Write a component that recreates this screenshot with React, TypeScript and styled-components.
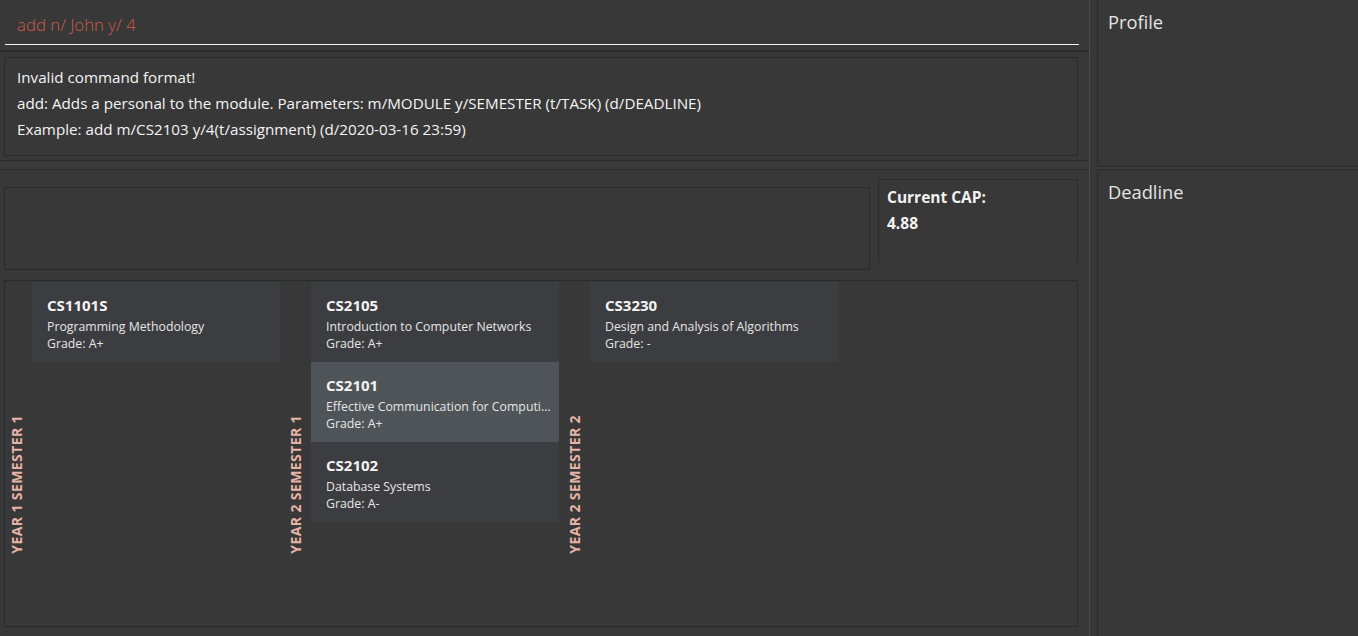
import React from "react";
import styled, { createGlobalStyle } from "styled-components";

const GlobalStyle = createGlobalStyle`
  html, body { margin: 0; padding: 0; background: #383838; }
  body { font-family: "Open Sans", "Noto Sans", sans-serif; color: #f0f0f0; }
  * { box-sizing: border-box; }
`;

const Root = styled.div`
  display: flex;
  width: 1358px;
  height: 636px;
  background: #383838;
  overflow: hidden;
`;

const LeftPane = styled.div`
  width: 1089px;
  display: flex;
  flex-direction: column;
`;

const CommandArea = styled.div`
  height: 50px;
  padding: 0 10px 0 5px;
`;

const CommandInput = styled.div`
  height: 45px;
  border-bottom: 1px solid #f2f2f2;
  padding: 4px 0 0 12px;
  display: flex;
  align-items: center;
  font-size: 16.8px;
  font-weight: 300;
  color: #cd5a4a;
`;

const HLine = styled.div`
  height: 2px;
  background: #2c2c2c;
`;

const ResultArea = styled.div`
  height: 108px;
  padding: 5px 11px 4px 4px;
`;

const ResultBox = styled.div`
  height: 99px;
  border: 1px solid #2b2b2b;
  padding: 6px 12px 0;
  font-size: 15.2px;
  line-height: 26px;
  color: #f4f4f4;
`;

const SplitDividerH = styled.div`
  height: 10px;
  border-top: 1px solid #2b2b2b;
  border-bottom: 1px solid #2b2b2b;
  background: #3a3a3a;
`;

const LowerArea = styled.div`
  flex: 1;
  display: flex;
  flex-direction: column;
  padding: 9px 11px 9px 4px;
`;

const TopRow = styled.div`
  display: flex;
  height: 91px;
  gap: 8px;
`;

const EmptyBox = styled.div`
  flex: 1;
  margin-top: 8px;
  border: 1px solid #2b2b2b;
`;

const CapBox = styled.div`
  width: 200px;
  height: 84px;
  border: 1px solid #2b2b2b;
  border-bottom: none;
  padding: 4px 8px;
  font-size: 15.5px;
  font-weight: 700;
  line-height: 26px;
  color: #f2f2f2;
`;

const ModuleBox = styled.div`
  margin-top: 10px;
  flex: 1;
  border: 1px solid #2b2b2b;
  padding: 1px 0 0 0;
  display: flex;
  gap: 4px;
`;

const SemesterColumn = styled.div`
  display: flex;
`;

const SemesterLabelCell = styled.div`
  width: 27px;
  display: flex;
  flex-direction: column;
  justify-content: flex-end;
  align-items: flex-start;
  padding: 0 0 72px 2px;
`;

const SemesterLabel = styled.span`
  writing-mode: vertical-rl;
  transform: rotate(180deg);
  font-size: 14px;
  line-height: 19px;
  font-weight: 700;
  color: #e6b3a7;
  letter-spacing: 0.4px;
  white-space: nowrap;
`;

const CardList = styled.div`
  width: 248px;
  display: flex;
  flex-direction: column;
`;

const Card = styled.div<{ $selected?: boolean }>`
  height: 80px;
  padding: 13px 8px 0 15px;
  background: ${(p) => (p.$selected ? "#4e5457" : "#3c3d40")};
  overflow: hidden;
`;

const CardCode = styled.div`
  font-size: 15px;
  font-weight: 700;
  line-height: 20px;
  margin-bottom: 3px;
  color: #f4f4f4;
`;

const CardLine = styled.div`
  font-size: 12.3px;
  line-height: 17px;
  color: #e6e6e6;
  white-space: nowrap;
  overflow: hidden;
  text-overflow: ellipsis;
`;

const SplitDividerV = styled.div`
  width: 8px;
  border-left: 1px solid #4a4a4a;
  background: #383838;
`;

const RightPane = styled.div`
  flex: 1;
  display: flex;
  flex-direction: column;
`;

const ProfileBox = styled.div`
  height: 167px;
  border-left: 1px solid #2b2b2b;
  border-bottom: 1px solid #2b2b2b;
  padding: 10px 10px;
`;

const RightGap = styled.div`
  height: 2px;
  background: #3c3c3c;
`;

const DeadlineBox = styled.div`
  flex: 1;
  border-left: 1px solid #2b2b2b;
  border-top: 1px solid #2b2b2b;
  padding: 10px 10px;
`;

const PanelTitle = styled.div`
  font-size: 18.3px;
  line-height: 24px;
  color: #e4e4e4;
`;

type Module = { code: string; title: string; grade: string; selected?: boolean };
type Semester = { label: string; modules: Module[] };

const semesters: Semester[] = [
  {
    label: "YEAR 1 SEMESTER 1",
    modules: [{ code: "CS1101S", title: "Programming Methodology", grade: "A+" }],
  },
  {
    label: "YEAR 2 SEMESTER 1",
    modules: [
      { code: "CS2105", title: "Introduction to Computer Networks", grade: "A+" },
      {
        code: "CS2101",
        title: "Effective Communication for Computing Professionals",
        grade: "A+",
        selected: true,
      },
      { code: "CS2102", title: "Database Systems", grade: "A-" },
    ],
  },
  {
    label: "YEAR 2 SEMESTER 2",
    modules: [{ code: "CS3230", title: "Design and Analysis of Algorithms", grade: "-" }],
  },
];

export default function App() {
  return (
    <>
      <GlobalStyle />
      <Root>
        <LeftPane>
          <CommandArea>
            <CommandInput>add n/ John y/ 4</CommandInput>
          </CommandArea>
          <HLine />
          <ResultArea>
            <ResultBox>
              <div>Invalid command format!</div>
              <div>
                add: Adds a personal to the module. Parameters: m/MODULE y/SEMESTER (t/TASK) (d/DEADLINE)
              </div>
              <div>Example: add m/CS2103 y/4(t/assignment) (d/2020-03-16 23:59)</div>
            </ResultBox>
          </ResultArea>
          <SplitDividerH />
          <LowerArea>
            <TopRow>
              <EmptyBox />
              <CapBox>
                <div>Current CAP:</div>
                <div>4.88</div>
              </CapBox>
            </TopRow>
            <ModuleBox>
              {semesters.map((s) => (
                <SemesterColumn key={s.label}>
                  <SemesterLabelCell>
                    <SemesterLabel>{s.label}</SemesterLabel>
                  </SemesterLabelCell>
                  <CardList>
                    {s.modules.map((m) => (
                      <Card key={m.code} $selected={m.selected}>
                        <CardCode>{m.code}</CardCode>
                        <CardLine>{m.title}</CardLine>
                        <CardLine>Grade: {m.grade}</CardLine>
                      </Card>
                    ))}
                  </CardList>
                </SemesterColumn>
              ))}
            </ModuleBox>
          </LowerArea>
        </LeftPane>
        <SplitDividerV />
        <RightPane>
          <ProfileBox>
            <PanelTitle>Profile</PanelTitle>
          </ProfileBox>
          <RightGap />
          <DeadlineBox>
            <PanelTitle>Deadline</PanelTitle>
          </DeadlineBox>
        </RightPane>
      </Root>
    </>
  );
}
